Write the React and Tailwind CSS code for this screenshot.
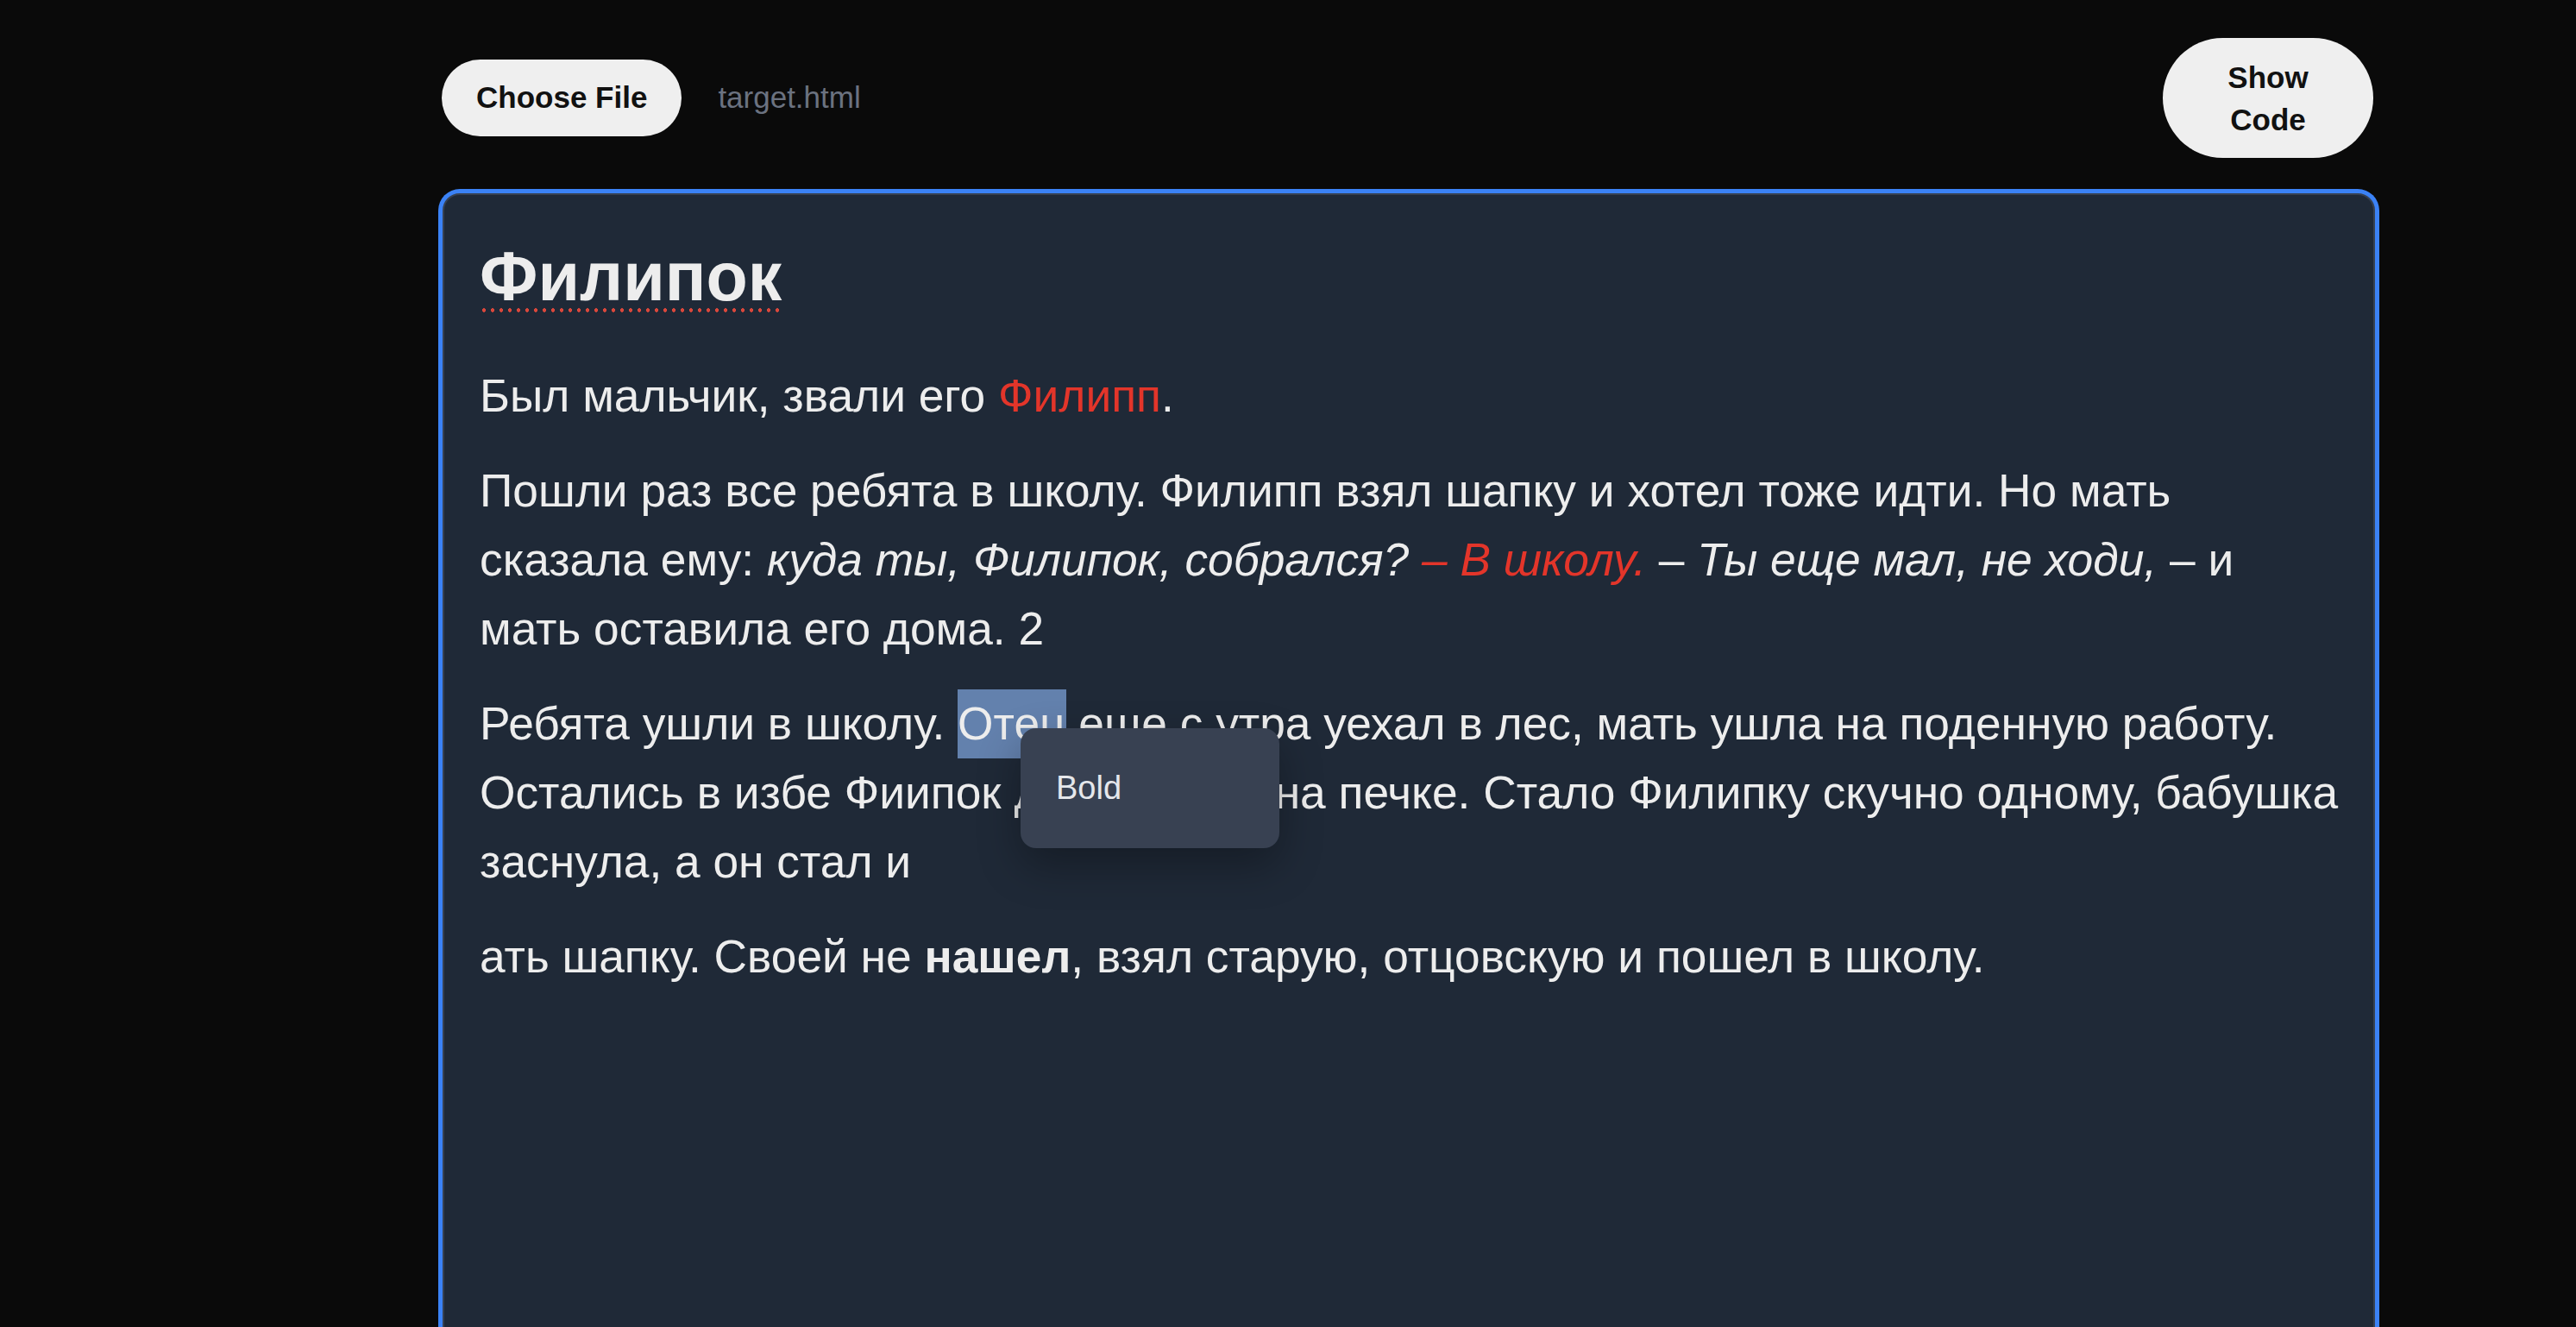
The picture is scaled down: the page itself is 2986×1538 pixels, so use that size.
import React from "react"

const fontSans = "font-['Liberation_Sans',Arial,sans-serif]"

function TopBar() {
  return (
    <div className="flex items-center justify-between pl-[4px] pr-[7px]">
      <div className="flex items-center gap-[42px]">
        <button className="h-[89px] rounded-full bg-[#efefef] px-[40px] text-[35px] font-bold text-[#111]">
          Choose File
        </button>
        <span className="text-[35px] text-[#6b7280]">target.html</span>
      </div>
      <button className="h-[139px] w-[244px] rounded-full bg-[#efefef] px-[38px] text-[35px] font-bold leading-[49px] text-[#111]">
        Show Code
      </button>
    </div>
  )
}

function Editor() {
  return (
    <div className="relative mx-[5px] mt-[41px] min-h-[1400px] rounded-[20px] border-2 border-[#374151] bg-[#1f2937] pl-[41px] pr-[34px] pt-[52px] text-[#ededed] ring-[5px] ring-[#3b82f6]">
      <h1 className="mb-[55px] text-[79px] font-bold leading-[86px]">
        <span className="relative">
          Филипок
          <span className="absolute bottom-[3px] left-0 right-0 h-[5px] bg-[radial-gradient(circle,#d9473b_2px,transparent_2.5px)] bg-[length:10px_5px] bg-left bg-repeat-x" />
        </span>
      </h1>

      <div className="text-[53.3px] leading-[80px]">
        <p className="mb-[30px]">
          Был мальчик, звали его <span className="text-[#e3352a]">Филипп</span>.
        </p>
        <p className="mb-[30px]">
          Пошли раз все ребята в школу. Филипп взял шапку и хотел тоже идти. Но мать сказала ему:{" "}
          <i>куда ты, Филипок, собрался?</i> <i className="text-[#e3352a]">– В школу.</i> – <i>Ты еще мал, не ходи,</i> – и мать
          оставила его дома. 2
        </p>
        <p className="mb-[30px]">
          Ребята ушли в школу. <span className="inline-block bg-[#6381ad]">Отец</span> еще с утра уехал в лес, мать ушла на
          поденную работу. Остались в избе Фиипок да бабушка на печке. Стало Филипку скучно одному, бабушка заснула, а он
          стал и
        </p>
        <p className="mb-[30px]">
          ать шапку. Своей не <b>нашел</b>, взял старую, отцовскую и пошел в школу.
        </p>
      </div>

      {/* format menu over the selection */}
      <div className="absolute left-[668px] top-[618px] flex h-[139px] w-[300px] items-center rounded-[18px] bg-[#384152] px-[41px] shadow-[0_20px_50px_rgba(0,0,0,0.3)]">
        <span className="text-[38px] text-[#e5e7eb]">Bold</span>
      </div>
    </div>
  )
}

export default function App() {
  return (
    <div className={`h-screen overflow-hidden bg-[#0a0a0a] ${fontSans}`}>
      <div className="ml-[508px] w-[2250px] pt-[44px]">
        <TopBar />
        <Editor />
      </div>
    </div>
  )
}
